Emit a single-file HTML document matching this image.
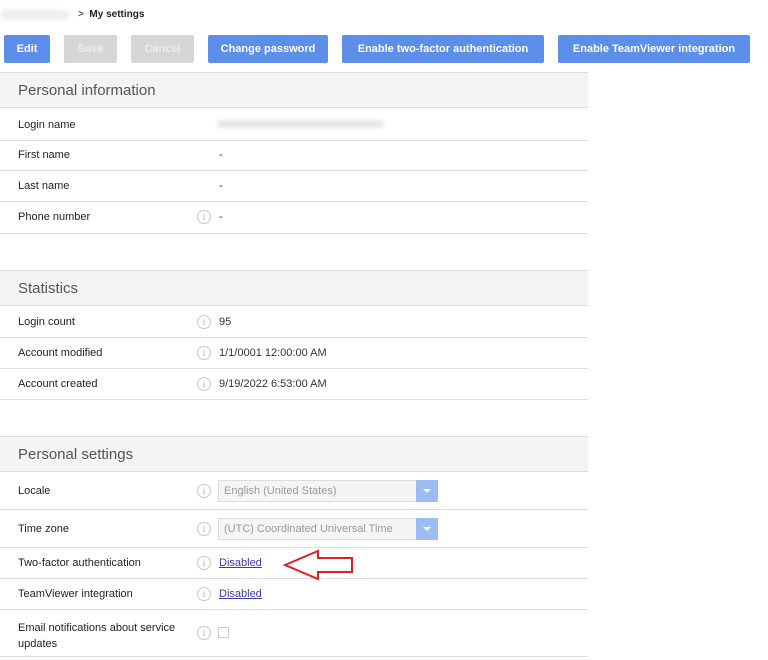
<!DOCTYPE html>
<html><head><style>
*{margin:0;padding:0;box-sizing:border-box}
body{width:768px;height:660px;background:#fff;font-family:"Liberation Sans",sans-serif;position:relative;overflow:hidden;color:#222}
.a{position:absolute}
.btn{position:absolute;top:35px;height:28px;border-radius:2px;color:#fff;font-size:11px;font-weight:bold;text-align:center;line-height:28px;background:#5b8fea}
.dis{background:#d6d6d6;color:#eee}
.hd{position:absolute;left:0;width:588px;height:36px;background:#f4f4f4;border-top:1px solid #ddd;border-bottom:1px solid #ddd;font-size:15px;color:#555;padding-left:18px;line-height:35px}
.ln{position:absolute;left:0;width:588px;height:1px;background:#ddd}
.lb{position:absolute;left:18px;font-size:11px;color:#222}
.v{position:absolute;left:219px;font-size:11px;color:#333}
.i{position:absolute;left:197px;width:14px;height:14px;border:1px solid #c8c8c8;border-radius:50%;font-size:9px;color:#aaa;text-align:center;line-height:12px;font-family:"Liberation Serif",serif}
.sel{position:absolute;left:218px;width:220px;height:22px;border:1px solid #ddd;background:#f5f5f5;font-size:11px;color:#999;padding-left:5px;line-height:20px}
.sel b{position:absolute;right:-1px;top:-1px;width:22px;height:22px;background:#9dbcf2}
.sel b:after{content:"";position:absolute;left:7px;top:9px;border:4px solid transparent;border-top:4px solid #fff}
a{color:#3a3aa8;text-decoration:underline}
</style></head><body>
<div class="a" style="left:0;top:10px;width:70px;height:10px;background:#eee;border-radius:5px;filter:blur(2px)"></div>
<div class="a" style="left:78px;top:9px;font-size:10px">&gt;&nbsp; <b>My settings</b></div>
<div class="btn" style="left:4px;width:46px">Edit</div>
<div class="btn dis" style="left:64px;width:53px">Save</div>
<div class="btn dis" style="left:131px;width:63px">Cancel</div>
<div class="btn" style="left:208px;width:120px">Change password</div>
<div class="btn" style="left:342px;width:202px">Enable two-factor authentication</div>
<div class="btn" style="left:558px;width:192px">Enable TeamViewer integration</div>

<div class="hd" style="top:72px">Personal information</div>
<div class="lb" style="top:119px">Login name</div><div class="a" style="left:218px;top:120px;width:165px;height:8px;background:#e6e6e6;filter:blur(2px)"></div><div class="ln" style="top:140px"></div>
<div class="lb" style="top:149px">First name</div><div class="v" style="top:149px">-</div><div class="ln" style="top:170px"></div>
<div class="lb" style="top:180px">Last name</div><div class="v" style="top:180px">-</div><div class="ln" style="top:201px"></div>
<div class="lb" style="top:211px">Phone number</div><div class="i" style="top:210px">i</div><div class="v" style="top:211px">-</div><div class="ln" style="top:233px"></div>

<div class="hd" style="top:270px">Statistics</div>
<div class="lb" style="top:316px">Login count</div><div class="i" style="top:315px">i</div><div class="v" style="top:316px">95</div><div class="ln" style="top:337px"></div>
<div class="lb" style="top:347px">Account modified</div><div class="i" style="top:346px">i</div><div class="v" style="top:347px">1/1/0001 12:00:00 AM</div><div class="ln" style="top:368px"></div>
<div class="lb" style="top:378px">Account created</div><div class="i" style="top:377px">i</div><div class="v" style="top:378px">9/19/2022 6:53:00 AM</div><div class="ln" style="top:399px"></div>

<div class="hd" style="top:436px">Personal settings</div>
<div class="lb" style="top:485px">Locale</div><div class="i" style="top:484px">i</div><div class="sel" style="top:480px">English (United States)<b></b></div><div class="ln" style="top:509px"></div>
<div class="lb" style="top:523px">Time zone</div><div class="i" style="top:522px">i</div><div class="sel" style="top:518px">(UTC) Coordinated Universal Time<b></b></div><div class="ln" style="top:547px"></div>
<div class="lb" style="top:557px">Two-factor authentication</div><div class="i" style="top:556px">i</div><div class="v" style="top:557px"><a>Disabled</a></div><div class="ln" style="top:578px"></div>
<svg class="a" style="left:282px;top:548px" width="72" height="34"><path d="M3 17 L36 3 L36 10 L70 10 L70 24 L36 24 L36 31 Z" fill="none" stroke="#e02020" stroke-width="2"/></svg>
<div class="lb" style="top:588px">TeamViewer integration</div><div class="i" style="top:587px">i</div><div class="v" style="top:588px"><a>Disabled</a></div><div class="ln" style="top:609px"></div>
<div class="lb" style="top:620px;line-height:16px">Email notifications about service<br>updates</div><div class="i" style="top:626px">i</div><div class="a" style="left:218px;top:627px;width:11px;height:11px;border:1px solid #ccc"></div><div class="ln" style="top:656px"></div>
</body></html>
